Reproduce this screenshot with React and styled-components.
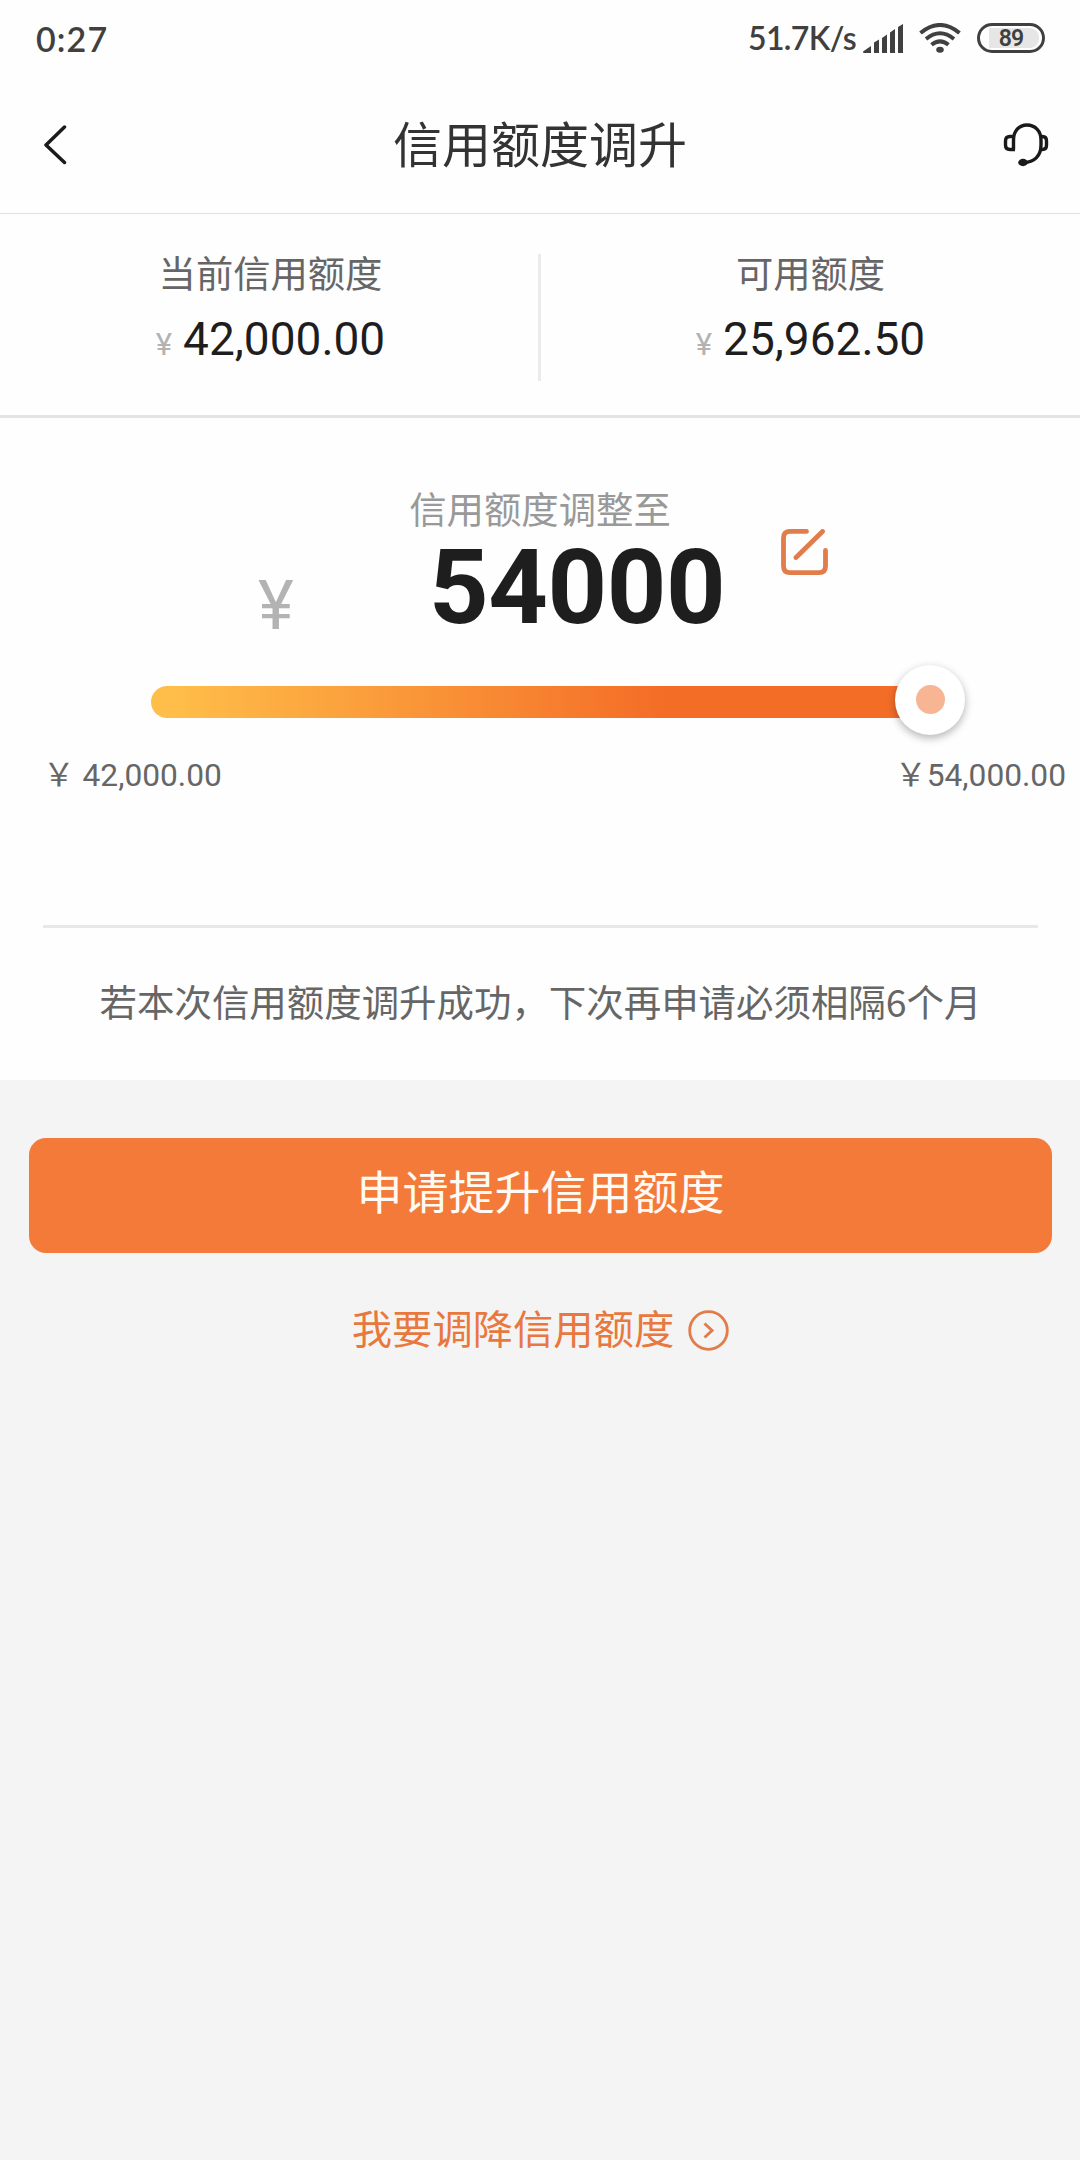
import React from "react";
import styled, { createGlobalStyle } from "styled-components";

const GlobalStyle = createGlobalStyle`
  * {
    box-sizing: border-box;
  }
  body {
    margin: 0;
    background: #f4f4f4;
    font-family: Roboto, "Noto Sans CJK SC", sans-serif;
  }
`;

const Screen = styled.div`
  display: flex;
  flex-direction: column;
  width: 1080px;
  height: 2160px;
  overflow: hidden;
  background: #f4f4f4;
`;

const StatusBar = styled.div`
  display: flex;
  align-items: center;
  height: 76px;
  padding: 0 35px 0 36px;
  background: #fefefe;
  color: #404040;
  font-family: Lato, sans-serif;
`;

const Time = styled.span`
  flex: 1;
  font-size: 34px;
  font-weight: 600;
  letter-spacing: 1.1px;
  line-height: 76px;
  padding-top: 1px;
`;

const Speed = styled.span`
  margin-right: 7px;
  font-size: 32px;
  font-weight: 600;
  letter-spacing: -0.6px;
  line-height: 76px;
`;

const SignalIcon = styled.svg`
  margin-right: 16px;
`;

const WifiIcon = styled.svg`
  margin-right: 16px;
`;

const Battery = styled.div`
  display: flex;
  width: 68px;
  height: 30px;
  padding: 2px 2px 2px 9px;
  border: 3px solid #404040;
  border-radius: 15px;
`;

const BatteryLevel = styled.div`
  display: flex;
  align-items: center;
  justify-content: center;
  width: 50px;
  height: 20px;
  border-radius: 1px 9px 9px 1px;
  background: #e6e6e6;
  padding: 1px 6px 0 0;
  font-family: Roboto, sans-serif;
  font-size: 23px;
  font-weight: 600;
  letter-spacing: -0.8px;
`;

const Header = styled.header`
  display: grid;
  grid-template-columns: 100px 1fr 100px;
  align-items: center;
  height: 138px;
  border-bottom: 1px solid #e0e0e0;
  background: #fefefe;
`;

const IconButton = styled.button`
  display: flex;
  justify-content: ${({ $end }) => ($end ? "flex-end" : "flex-start")};
  padding: ${({ $end }) => ($end ? "0 31px 0 0" : "0 0 0 43px")};
  border: none;
  background: none;

  svg {
    flex: none;
  }
`;

const Title = styled.h1`
  margin: 0;
  padding-top: 5px;
  color: #333;
  font-size: 49px;
  font-weight: 400;
  line-height: 70px;
  text-align: center;
`;

const Summary = styled.section`
  display: flex;
  height: 204px;
  padding-top: 40px;
  border-bottom: 3px solid #e4e4e4;
  background: #fefefe;
`;

const SummaryItem = styled.div`
  display: flex;
  flex-direction: column;
  align-items: center;
  width: ${({ $first }) => ($first ? 538 : 539)}px;
  padding-left: ${({ $first }) => ($first ? 3 : 0)}px;
`;

const SummaryLine = styled.div`
  width: 3px;
  height: 127px;
  background: #ebebeb;
`;

const Label = styled.div`
  height: 58px;
  color: #666;
  font-size: 37.3px;
  line-height: 42px;
`;

const Value = styled.div`
  display: flex;
  align-items: baseline;
  color: #1e1e1e;
  font-size: 46px;
  line-height: 54px;
`;

const Currency = styled.span`
  margin-right: 11px;
  color: #b3b3b3;
  font-size: 31px;
`;

const Adjust = styled.section`
  display: flex;
  flex-direction: column;
  height: 662px;
  padding-top: 66px;
  background: #fefefe;
`;

const Prompt = styled.div`
  height: 45px;
  color: #999;
  font-size: 37.4px;
  line-height: 54px;
  text-align: center;
`;

const AmountRow = styled.div`
  display: flex;
  align-items: flex-start;
  height: 135px;
  padding-left: 258px;
`;

const BigCurrency = styled.span`
  width: 171px;
  padding-top: 37px;
  color: #b3b3b3;
  font-size: 68px;
  line-height: 80px;
`;

const Amount = styled.span`
  width: 352px;
  padding-top: 9px;
  color: #1e1e1e;
  font-size: 104px;
  font-weight: 700;
  letter-spacing: -0.4px;
  line-height: 100px;
`;

const Slider = styled.div`
  display: flex;
  align-items: center;
  height: 71px;
  margin-left: 151px;
`;

const Track = styled.div`
  width: 760px;
  height: 32px;
  margin-top: 4px;
  border-radius: 16px 0 0 16px;
  background: linear-gradient(90deg, #ffbe49 0, #ffbe49 20px, #f46d27 510px);
`;

const Knob = styled.div`
  display: flex;
  align-items: center;
  justify-content: center;
  width: 70px;
  height: 70px;
  margin-left: -16px;
  border-radius: 50%;
  background: #fff;
  box-shadow: 0 3px 9px rgba(0, 0, 0, 0.3);

  &::after {
    content: "";
    width: 29px;
    height: 29px;
    border-radius: 50%;
    background: #f8b593;
  }
`;

const Range = styled.div`
  display: flex;
  justify-content: space-between;
  height: 190px;
  padding: 23px 14px 0 43px;
  color: #666;
  font-size: 31.7px;
  line-height: 36px;
  white-space: pre;
`;

const Note = styled.p`
  flex: 1;
  margin: 0 42px 0 43px;
  padding-top: 46px;
  border-top: 3px solid #e8e8e8;
  color: #666;
  font-family: "Noto Sans CJK SC", sans-serif;
  font-size: 37.45px;
  line-height: 54px;
  text-align: center;
  white-space: nowrap;
`;

const Actions = styled.section`
  display: flex;
  flex-direction: column;
  align-items: center;
  padding-top: 58px;
`;

const SubmitButton = styled.button`
  width: 1023px;
  height: 115px;
  padding: 0 0 13px 1px;
  border: none;
  border-radius: 17px;
  background: #f47a3a;
  color: #fffaf3;
  font-family: inherit;
  font-size: 46px;
`;

const LowerLink = styled.a`
  display: flex;
  align-items: center;
  gap: 14px;
  margin: 46px 0 0 1px;
  color: #e8783e;
  font-size: 40.3px;
  line-height: 60px;
`;

const LinkText = styled.span`
  padding-top: 2px;
`;

const summary = [
  { label: "当前信用额度", value: "42,000.00" },
  { label: "可用额度", value: "25,962.50" },
];

function Signal() {
  return (
    <SignalIcon width="40" height="29" viewBox="0 0 40 29" fill="#404040">
      <path d="M0 27.5 L8 22 V29 H1 Q0 29 0 27.5 Z" />
      <path d="M11 18.5 L16 15.5 V29 H11 Z" />
      <path d="M19 14 L24 10.5 V29 H19 Z" />
      <path d="M27 8.5 L32 5 V29 H27 Z" />
      <path d="M35 3 L40 0 V29 H35 Z" />
    </SignalIcon>
  );
}

function Wifi() {
  return (
    <WifiIcon width="42" height="30" viewBox="0 0 42 30" fill="none" stroke="#404040" strokeWidth="4">
      <path d="M1.5 10 Q21 -6 40.5 10" />
      <path d="M7 16 Q21 4.5 35 16" />
      <path d="M12.5 21.8 Q21 15 29.5 21.8" />
      <ellipse cx="21" cy="26.7" rx="3.8" ry="3" fill="#404040" stroke="none" />
    </WifiIcon>
  );
}

function Headset() {
  return (
    <svg width="46" height="44" viewBox="0 0 46 44" fill="none" stroke="#1a1a1a" strokeWidth="3.4">
      <path d="M10.5 26.5 V17 C10.5 8 16 2 24 2 C32 2 38 8 38 17 V22 C38 33 31 39.5 21 39.5" />
      <path d="M10.5 13.5 H7 Q2.5 13.5 2.5 18 V22 Q2.5 26.5 7 26.5 H12" />
      <path d="M38 13.5 H39.5 Q43.5 13.5 43.5 18 V22 Q43.5 26.5 39.5 26.5 H37" />
      <ellipse cx="20" cy="39.5" rx="4.8" ry="3.7" fill="#1a1a1a" stroke="none" />
    </svg>
  );
}

function Edit() {
  return (
    <svg width="47" height="46" viewBox="0 0 47 46" fill="none" stroke="#e17c4b" strokeWidth="4.8" strokeLinecap="round">
      <path d="M25.5 2.4 H9 Q2.5 2.4 2.5 9 V37 Q2.5 43.6 9 43.6 H38 Q44.5 43.6 44.5 37 V21.5" />
      <path d="M41.5 2.5 L15 28.5" />
    </svg>
  );
}

export default function App() {
  const [amount] = React.useState(54000);

  return (
    <Screen>
      <GlobalStyle />
      <StatusBar>
        <Time>0:27</Time>
        <Speed>51.7K/s</Speed>
        <Signal />
        <Wifi />
        <Battery>
          <BatteryLevel>89</BatteryLevel>
        </Battery>
      </StatusBar>

      <Header>
        <IconButton>
          <svg width="24" height="40" viewBox="0 0 24 40" fill="none" stroke="#1a1a1a" strokeWidth="3.5" strokeLinecap="round" strokeLinejoin="round">
            <path d="M21.5 2 L3 20 L21.5 37.5" />
          </svg>
        </IconButton>
        <Title>信用额度调升</Title>
        <IconButton $end>
          <Headset />
        </IconButton>
      </Header>

      <Summary>
        <SummaryItem $first>
          <Label>{summary[0].label}</Label>
          <Value>
            <Currency>¥</Currency>
            {summary[0].value}
          </Value>
        </SummaryItem>
        <SummaryLine />
        <SummaryItem>
          <Label>{summary[1].label}</Label>
          <Value>
            <Currency>¥</Currency>
            {summary[1].value}
          </Value>
        </SummaryItem>
      </Summary>

      <Adjust>
        <Prompt>信用额度调整至</Prompt>
        <AmountRow>
          <BigCurrency>¥</BigCurrency>
          <Amount>{amount}</Amount>
          <Edit />
        </AmountRow>
        <Slider>
          <Track />
          <Knob />
        </Slider>
        <Range>
          <span>￥ 42,000.00</span>
          <span>￥54,000.00</span>
        </Range>
        <Note>若本次信用额度调升成功，下次再申请必须相隔6个月</Note>
      </Adjust>

      <Actions>
        <SubmitButton>申请提升信用额度</SubmitButton>
        <LowerLink>
          <LinkText>我要调降信用额度</LinkText>
          <svg width="41" height="41" viewBox="0 0 41 41" fill="none" stroke="#e17c4b" strokeWidth="2.8">
            <circle cx="20.5" cy="20.5" r="18.8" />
            <path d="M16.5 13.5 L24 20.5 L16.5 27.5" strokeWidth="3" />
          </svg>
        </LowerLink>
      </Actions>
    </Screen>
  );
}
